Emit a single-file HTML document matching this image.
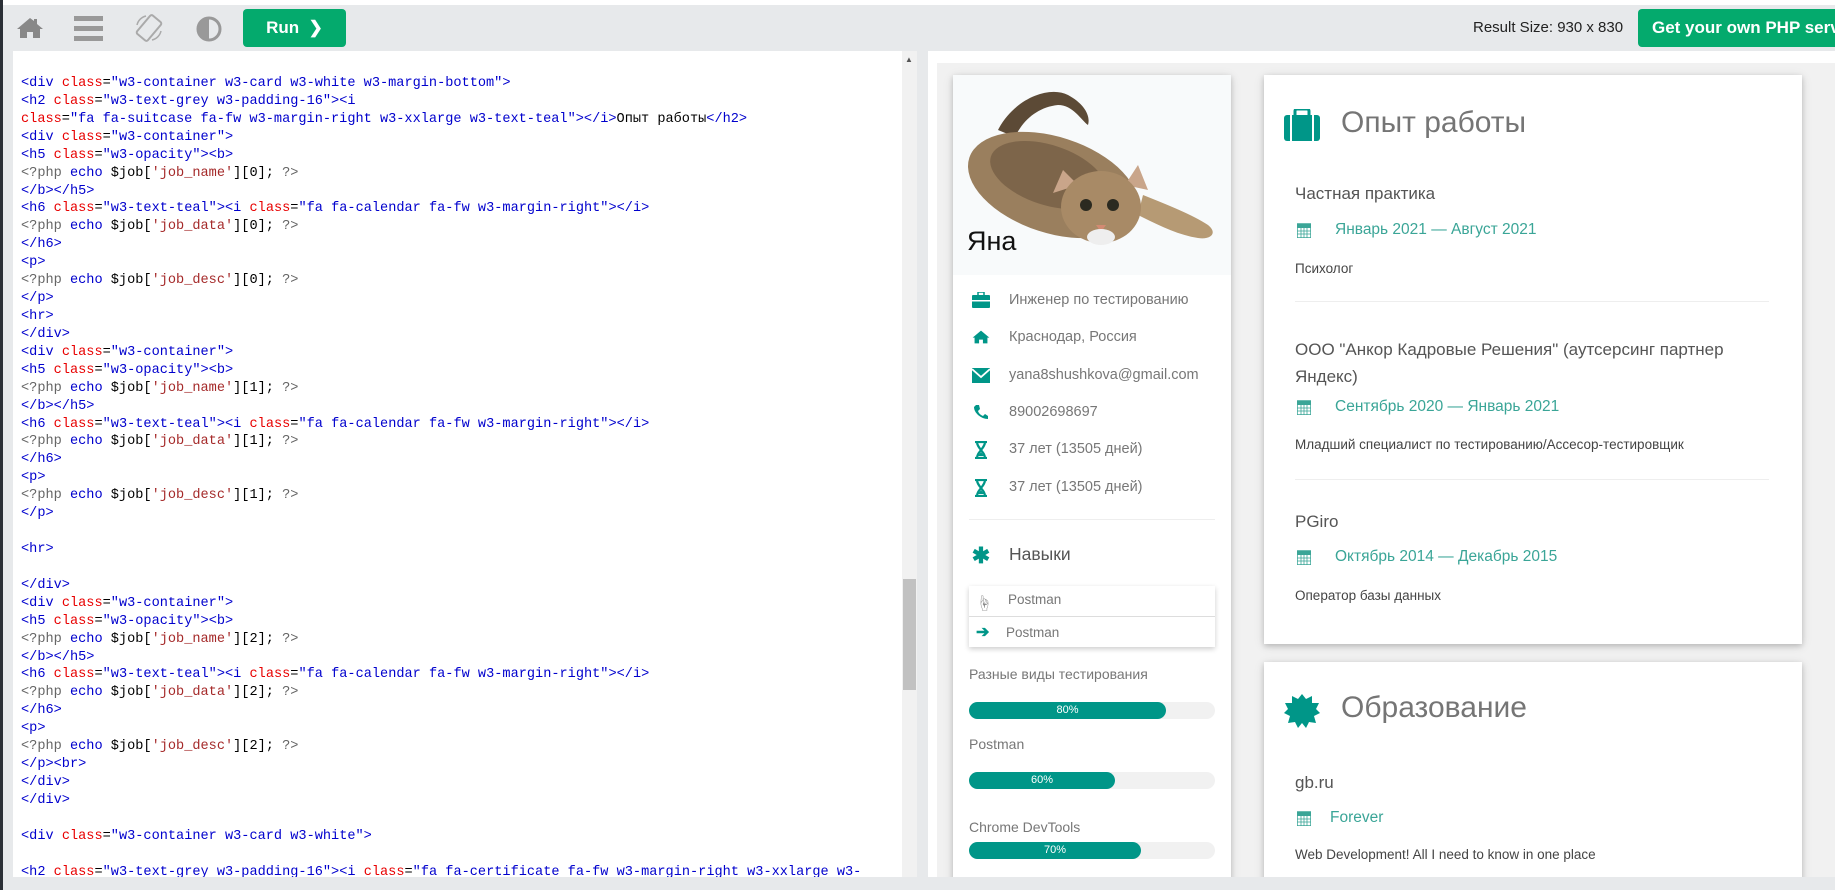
<!DOCTYPE html>
<html><head><meta charset="utf-8">
<style>
*{margin:0;padding:0;box-sizing:border-box}
html{overflow:hidden;width:1835px;height:890px}
body{width:1835px;height:890px;background:#e7e9eb;position:relative;overflow:hidden;font-family:"Liberation Sans","Noto Sans CJK SC",sans-serif}
.abs{position:absolute}
#leftdark{left:0;top:0;width:3px;height:890px;background:#2b2f36}
#topw{left:3px;top:0;width:1832px;height:5px;background:#fff}
.run{left:243px;top:9px;width:103px;height:38px;background:#04aa6d;border-radius:4px;color:#fff;font-weight:bold;font-size:17px;line-height:38px;text-align:center}
.get{left:1638px;top:9px;width:197px;height:38px;background:#04aa6d;border-radius:4px 0 0 4px;color:#fff;font-weight:bold;font-size:17px;line-height:38px;padding-left:14px;white-space:nowrap;overflow:hidden}
.rs{left:1473px;top:19px;font-size:15px;color:#222}
#code{left:13px;top:51px;width:904px;height:826px;background:#fff;overflow:hidden}
#code pre{position:absolute;left:8px;top:24px;font-family:"Liberation Mono",monospace;font-size:13.6px;line-height:17.92px;color:#000}
.t{color:#0000cd}.a{color:#e80000}.s{color:#0000cd}.k{color:#0000cd}.q{color:#a52a2a}.g{color:#666}
#sb{left:902px;top:51px;width:15px;height:826px;background:#f1f1f1}
#thumb{left:903px;top:579px;width:13px;height:111px;background:#c1c1c1}
#clip{position:absolute;left:0;top:0;width:1835px;height:890px;clip-path:inset(51px 0 13px 928px)}
#rp{left:928px;top:51px;width:907px;height:826px;background:#fff}
#rin{left:937px;top:63px;width:898px;height:814px;background:#f1f1f1}
.card{background:#fff;box-shadow:0 2px 5px rgba(0,0,0,.16),0 2px 10px rgba(0,0,0,.12)}
.li{position:absolute;left:1009px;font-size:14.5px;color:#777;white-space:nowrap}
.ic{position:absolute;left:971px;width:20px;text-align:center;color:#009688}
.lbl{position:absolute;left:969px;font-size:14px;color:#777}
.bar{position:absolute;left:969px;width:246px;height:17px;background:#f1f1f1;border-radius:9px}
.fill{height:17px;background:#009688;border-radius:9px;color:#fff;font-size:11px;text-align:center;line-height:17px}
.h{position:absolute;font-size:30px;color:#757575;left:1341px}
.jn{position:absolute;left:1295px;font-size:17px;color:#555}
.dt{position:absolute;left:1335px;font-size:15.5px;color:#3aa597}
.ds{position:absolute;left:1295px;font-size:13.5px;color:#444}
.hr{position:absolute;left:1295px;width:474px;height:1px;background:#eee}
.cal{position:absolute;left:1297px}
</style></head><body>
<div class="abs" id="topw"></div>
<svg class="abs" style="left:16px;top:17px" width="28" height="22" viewBox="0 0 28 22"><path d="M14 1 L1 12 L4 12 L4 21 L11 21 L11 15 L17 15 L17 21 L24 21 L24 12 L27 12 L21 7 L21 2 L18 2 L18 4 Z" fill="#888"/></svg>
<svg class="abs" style="left:74px;top:16px" width="29" height="25"><rect x="0" y="0" width="29" height="5" fill="#999"/><rect x="0" y="10" width="29" height="5" fill="#999"/><rect x="0" y="20" width="29" height="5" fill="#999"/></svg>
<svg class="abs" style="left:134px;top:13px" width="30" height="30" viewBox="0 0 30 30"><rect x="8" y="3" width="14" height="24" rx="2" transform="rotate(40 15 15)" fill="none" stroke="#aaa" stroke-width="2"/><path d="M3 12 A12 12 0 0 1 12 3" fill="none" stroke="#aaa" stroke-width="1.5"/><path d="M27 18 A12 12 0 0 1 18 27" fill="none" stroke="#aaa" stroke-width="1.5"/></svg>
<svg class="abs" style="left:196px;top:16px" width="26" height="26"><circle cx="13" cy="13" r="11" fill="none" stroke="#999" stroke-width="3"/><path d="M13 2 A11 11 0 0 0 13 24 Z" fill="#999"/></svg>
<div class="abs run">Run &nbsp;❯</div>
<div class="abs rs">Result Size: 930 x 830</div>
<div class="abs get">Get your own PHP server</div>

<div class="abs" id="code"><pre><span class="t">&lt;div</span> <span class="a">class</span>=<span class="s">"w3-container w3-card w3-white w3-margin-bottom"</span><span class="t">&gt;</span>
<span class="t">&lt;h2</span> <span class="a">class</span>=<span class="s">"w3-text-grey w3-padding-16"</span><span class="t">&gt;&lt;i</span>
<span class="a">class</span>=<span class="s">"fa fa-suitcase fa-fw w3-margin-right w3-xxlarge w3-text-teal"</span><span class="t">&gt;&lt;/i&gt;</span>Опыт работы<span class="t">&lt;/h2&gt;</span>
<span class="t">&lt;div</span> <span class="a">class</span>=<span class="s">"w3-container"</span><span class="t">&gt;</span>
<span class="t">&lt;h5</span> <span class="a">class</span>=<span class="s">"w3-opacity"</span><span class="t">&gt;&lt;b&gt;</span>
<span class="g">&lt;?php</span> <span class="k">echo</span> $job[<span class="q">'job_name'</span>][0]; <span class="g">?&gt;</span>
<span class="t">&lt;/b&gt;&lt;/h5&gt;</span>
<span class="t">&lt;h6</span> <span class="a">class</span>=<span class="s">"w3-text-teal"</span><span class="t">&gt;&lt;i</span> <span class="a">class</span>=<span class="s">"fa fa-calendar fa-fw w3-margin-right"</span><span class="t">&gt;&lt;/i&gt;</span>
<span class="g">&lt;?php</span> <span class="k">echo</span> $job[<span class="q">'job_data'</span>][0]; <span class="g">?&gt;</span>
<span class="t">&lt;/h6&gt;</span>
<span class="t">&lt;p&gt;</span>
<span class="g">&lt;?php</span> <span class="k">echo</span> $job[<span class="q">'job_desc'</span>][0]; <span class="g">?&gt;</span>
<span class="t">&lt;/p&gt;</span>
<span class="t">&lt;hr&gt;</span>
<span class="t">&lt;/div&gt;</span>
<span class="t">&lt;div</span> <span class="a">class</span>=<span class="s">"w3-container"</span><span class="t">&gt;</span>
<span class="t">&lt;h5</span> <span class="a">class</span>=<span class="s">"w3-opacity"</span><span class="t">&gt;&lt;b&gt;</span>
<span class="g">&lt;?php</span> <span class="k">echo</span> $job[<span class="q">'job_name'</span>][1]; <span class="g">?&gt;</span>
<span class="t">&lt;/b&gt;&lt;/h5&gt;</span>
<span class="t">&lt;h6</span> <span class="a">class</span>=<span class="s">"w3-text-teal"</span><span class="t">&gt;&lt;i</span> <span class="a">class</span>=<span class="s">"fa fa-calendar fa-fw w3-margin-right"</span><span class="t">&gt;&lt;/i&gt;</span>
<span class="g">&lt;?php</span> <span class="k">echo</span> $job[<span class="q">'job_data'</span>][1]; <span class="g">?&gt;</span>
<span class="t">&lt;/h6&gt;</span>
<span class="t">&lt;p&gt;</span>
<span class="g">&lt;?php</span> <span class="k">echo</span> $job[<span class="q">'job_desc'</span>][1]; <span class="g">?&gt;</span>
<span class="t">&lt;/p&gt;</span>

<span class="t">&lt;hr&gt;</span>

<span class="t">&lt;/div&gt;</span>
<span class="t">&lt;div</span> <span class="a">class</span>=<span class="s">"w3-container"</span><span class="t">&gt;</span>
<span class="t">&lt;h5</span> <span class="a">class</span>=<span class="s">"w3-opacity"</span><span class="t">&gt;&lt;b&gt;</span>
<span class="g">&lt;?php</span> <span class="k">echo</span> $job[<span class="q">'job_name'</span>][2]; <span class="g">?&gt;</span>
<span class="t">&lt;/b&gt;&lt;/h5&gt;</span>
<span class="t">&lt;h6</span> <span class="a">class</span>=<span class="s">"w3-text-teal"</span><span class="t">&gt;&lt;i</span> <span class="a">class</span>=<span class="s">"fa fa-calendar fa-fw w3-margin-right"</span><span class="t">&gt;&lt;/i&gt;</span>
<span class="g">&lt;?php</span> <span class="k">echo</span> $job[<span class="q">'job_data'</span>][2]; <span class="g">?&gt;</span>
<span class="t">&lt;/h6&gt;</span>
<span class="t">&lt;p&gt;</span>
<span class="g">&lt;?php</span> <span class="k">echo</span> $job[<span class="q">'job_desc'</span>][2]; <span class="g">?&gt;</span>
<span class="t">&lt;/p&gt;&lt;br&gt;</span>
<span class="t">&lt;/div&gt;</span>
<span class="t">&lt;/div&gt;</span>

<span class="t">&lt;div</span> <span class="a">class</span>=<span class="s">"w3-container w3-card w3-white"</span><span class="t">&gt;</span>

<span class="t">&lt;h2</span> <span class="a">class</span>=<span class="s">"w3-text-grey w3-padding-16"</span><span class="t">&gt;&lt;i</span> <span class="a">class</span>=<span class="s">"fa fa-certificate fa-fw w3-margin-right w3-xxlarge w3-</span></pre></div>
<div class="abs" id="sb"></div><div class="abs" id="thumb"></div>
<div class="abs" style="left:905px;top:55px;font-size:8px;color:#555">▲</div>

<div id="clip">
<div class="abs" id="rp"></div>
<div class="abs" id="rin"></div>

<div class="abs card" style="left:953px;top:75px;width:278px;height:820px"></div>
<svg class="abs" style="left:953px;top:75px" width="278" height="200" viewBox="0 0 278 200">
<rect width="278" height="200" fill="#f8fafb"/>
<path d="M45 55 C60 25 95 10 115 20 C130 28 138 40 135 50 C128 45 120 30 105 30 C85 32 70 45 62 62 Z" fill="#5c4a36"/>
<ellipse cx="100" cy="110" rx="88" ry="48" transform="rotate(18 100 110)" fill="#9a7f5e"/>
<ellipse cx="95" cy="100" rx="60" ry="30" transform="rotate(18 95 100)" fill="#7d654a"/>
<path d="M190 120 C215 130 240 140 255 150 C265 158 258 165 245 163 C225 160 205 150 185 140 Z" fill="#b69a74"/>
<path d="M110 95 L100 118 L125 110 Z" fill="#c9a58a"/>
<path d="M185 90 L195 115 L172 110 Z" fill="#c9a58a"/>
<ellipse cx="148" cy="132" rx="40" ry="36" fill="#a88a66"/>
<circle cx="133" cy="130" r="6" fill="#2b2a20"/><circle cx="160" cy="130" r="6" fill="#2b2a20"/>
<path d="M143 150 L153 150 L148 157 Z" fill="#d28a72"/>
<ellipse cx="148" cy="162" rx="14" ry="8" fill="#eee"/>
</svg>
<div class="abs" style="left:967px;top:226px;font-size:27px;color:#111">Яна</div>

<div class="ic" style="top:292px"><svg width="18" height="16"><rect x="0" y="3" width="18" height="13" rx="1" fill="#009688"/><rect x="6" y="0" width="6" height="4" fill="none" stroke="#009688" stroke-width="1.5"/><rect x="0" y="8" width="18" height="1.5" fill="#fff"/></svg></div>
<div class="li" style="top:292px">Инженер по тестированию</div>
<div class="ic" style="top:329px"><svg width="18" height="16" viewBox="0 0 28 22"><path d="M14 1 L1 12 L4 12 L4 21 L11 21 L11 15 L17 15 L17 21 L24 21 L24 12 L27 12 Z" fill="#009688"/></svg></div>
<div class="li" style="top:329px">Краснодар, Россия</div>
<div class="ic" style="top:368px"><svg width="18" height="15"><rect width="18" height="15" fill="#009688"/><path d="M0 1 L9 9 L18 1" fill="none" stroke="#fff" stroke-width="1.8"/></svg></div>
<div class="li" style="top:367px">yana8shushkova@gmail.com</div>
<div class="ic" style="top:404px"><svg width="16" height="16"><path d="M3 1 L6 1 L7 5 L5 7 C6 10 8 11 10 12 L12 10 L15 12 L15 15 C8 15 1 9 1 3 Z" fill="#009688"/></svg></div>
<div class="li" style="top:404px">89002698697</div>
<div class="ic" style="top:441px"><svg width="14" height="18"><path d="M1 1 H13 M1 17 H13 M3 1 C3 7 11 11 11 17 M11 1 C11 7 3 11 3 17" stroke="#009688" stroke-width="2.2" fill="none"/><path d="M4 15 L10 15 L7 11 Z" fill="#009688"/></svg></div>
<div class="li" style="top:441px">37 лет (13505 дней)</div>
<div class="ic" style="top:479px"><svg width="14" height="18"><path d="M1 1 H13 M1 17 H13 M3 1 C3 7 11 11 11 17 M11 1 C11 7 3 11 3 17" stroke="#009688" stroke-width="2.2" fill="none"/><path d="M4 15 L10 15 L7 11 Z" fill="#009688"/></svg></div>
<div class="li" style="top:479px">37 лет (13505 дней)</div>
<div class="abs" style="left:969px;top:519px;width:246px;height:1px;background:#eee"></div>
<div class="ic" style="top:543px;font-size:22px;font-weight:bold">✱</div>
<div class="abs" style="left:1009px;top:544px;font-size:17.5px;color:#555">Навыки</div>
<div class="abs" style="left:969px;top:586px;width:246px;height:61px;background:#fff;box-shadow:0 2px 5px rgba(0,0,0,.2)"></div>
<div class="abs" style="left:969px;top:616px;width:246px;height:1px;background:#ddd"></div>
<div class="abs" style="left:976px;top:590px;font-size:16px;color:#888">☝</div>
<div class="abs" style="left:1008px;top:592px;font-size:13.5px;color:#777">Postman</div>
<div class="abs" style="left:976px;top:622px;font-size:16px;color:#009688;font-weight:bold">➔</div>
<div class="abs" style="left:1006px;top:625px;font-size:13.5px;color:#777">Postman</div>
<div class="lbl" style="top:666px">Разные виды тестирования</div>
<div class="bar" style="top:702px"><div class="fill" style="width:197px">80%</div></div>
<div class="lbl" style="top:736px">Postman</div>
<div class="bar" style="top:772px"><div class="fill" style="width:146px">60%</div></div>
<div class="lbl" style="top:819px">Chrome DevTools</div>
<div class="bar" style="top:842px"><div class="fill" style="width:172px">70%</div></div>

<div class="abs card" style="left:1264px;top:75px;width:538px;height:569px"></div>
<svg class="abs" style="left:1284px;top:109px" width="36" height="32"><rect x="0" y="6" width="36" height="26" rx="3" fill="#009688"/><rect x="11" y="0" width="14" height="8" rx="2" fill="none" stroke="#009688" stroke-width="3"/><rect x="6" y="6" width="2" height="26" fill="#fff"/><rect x="28" y="6" width="2" height="26" fill="#fff"/></svg>
<div class="h" style="top:106px">Опыт работы</div>
<div class="jn" style="top:184px">Частная практика</div>
<svg class="cal" style="top:222px" width="14" height="16"><rect x="0" y="2" width="14" height="14" fill="none" stroke="#3aa597" stroke-width="1.5"/><rect x="0" y="2" width="14" height="4" fill="#3aa597"/><path d="M0 9H14M0 12H14M4 6V16M7 6V16M10 6V16" stroke="#3aa597" stroke-width=".8"/></svg>
<div class="dt" style="top:221px">Январь 2021 — Август 2021</div>
<div class="ds" style="top:261px">Психолог</div>
<div class="hr" style="top:301px"></div>
<div class="jn" style="top:336px;line-height:27px">ООО "Анкор Кадровые Решения" (аутсерсинг партнер<br>Яндекс)</div>
<svg class="cal" style="top:399px" width="14" height="16"><rect x="0" y="2" width="14" height="14" fill="none" stroke="#3aa597" stroke-width="1.5"/><rect x="0" y="2" width="14" height="4" fill="#3aa597"/><path d="M0 9H14M0 12H14M4 6V16M7 6V16M10 6V16" stroke="#3aa597" stroke-width=".8"/></svg>
<div class="dt" style="top:398px">Сентябрь 2020 — Январь 2021</div>
<div class="ds" style="top:437px">Младший специалист по тестированию/Ассесор-тестировщик</div>
<div class="hr" style="top:479px"></div>
<div class="jn" style="top:512px">PGiro</div>
<svg class="cal" style="top:549px" width="14" height="16"><rect x="0" y="2" width="14" height="14" fill="none" stroke="#3aa597" stroke-width="1.5"/><rect x="0" y="2" width="14" height="4" fill="#3aa597"/><path d="M0 9H14M0 12H14M4 6V16M7 6V16M10 6V16" stroke="#3aa597" stroke-width=".8"/></svg>
<div class="dt" style="top:548px">Октябрь 2014 — Декабрь 2015</div>
<div class="ds" style="top:588px">Оператор базы данных</div>

<div class="abs card" style="left:1264px;top:662px;width:538px;height:240px"></div>
<svg class="abs" style="left:1284px;top:694px" width="36" height="34" viewBox="0 0 36 34"><polygon points="18,0 22,5 28,2 28,9 35,9 32,15 36,19 30,22 32,29 25,28 22,34 18,29 14,34 11,28 4,29 6,22 0,19 4,15 1,9 8,9 8,2 14,5" fill="#009688"/></svg>
<div class="h" style="top:691px">Образование</div>
<div class="jn" style="top:773px">gb.ru</div>
<svg class="cal" style="top:810px" width="14" height="16"><rect x="0" y="2" width="14" height="14" fill="none" stroke="#3aa597" stroke-width="1.5"/><rect x="0" y="2" width="14" height="4" fill="#3aa597"/><path d="M0 9H14M0 12H14M4 6V16M7 6V16M10 6V16" stroke="#3aa597" stroke-width=".8"/></svg>
<div class="dt" style="top:809px;left:1330px">Forever</div>
<div class="ds" style="top:847px">Web Development! All I need to know in one place</div>
</div>

<div class="abs" id="leftdark"></div>
</body></html>
